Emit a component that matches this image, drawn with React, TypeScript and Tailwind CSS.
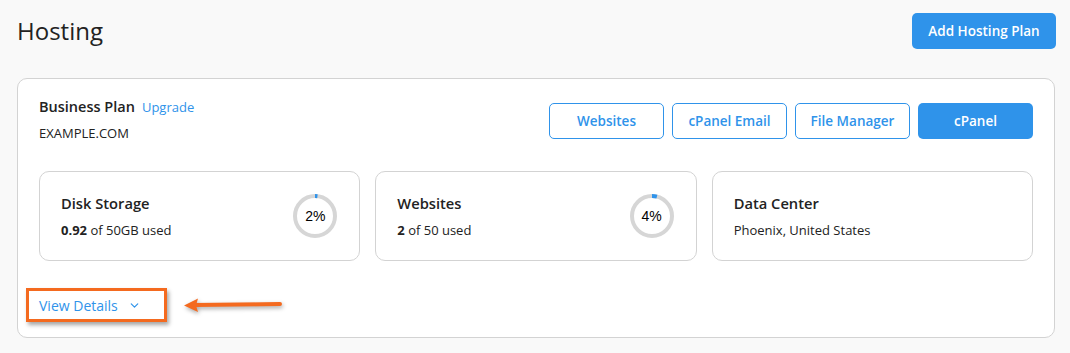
import { ChevronDown } from 'lucide-react'

function Ring({ pct }: { pct: number }) {
  const r = 20
  const c = 2 * Math.PI * r
  return (
    <div className="relative w-[44px] h-[44px] shrink-0">
      <svg width="44" height="44" viewBox="0 0 44 44" className="-rotate-90">
        <circle cx="22" cy="22" r={r} fill="none" stroke="#d6d6d6" strokeWidth="4" />
        <circle cx="22" cy="22" r={r} fill="none" stroke="#2f93ea" strokeWidth="4" strokeDasharray={`${(c * pct) / 100} ${c}`} />
      </svg>
      <span className="absolute inset-0 flex items-center justify-center text-[14px] text-black font-['Liberation_Sans',sans-serif]">{pct}%</span>
    </div>
  )
}

function Stat({ title, children, pct }: { title: string; children: React.ReactNode; pct?: number }) {
  return (
    <div className="flex-1 h-[90px] bg-white border border-[#d3d3d3] rounded-[10px] pl-[21px] pr-[22px] flex items-center justify-between">
      <div className="flex flex-col">
        <div className="text-[14.7px] font-semibold text-[#222] leading-5">{title}</div>
        <div className="text-[13px] text-[#222] mt-[7px] leading-5">{children}</div>
      </div>
      {pct !== undefined && <Ring pct={pct} />}
    </div>
  )
}

export default function App() {
  const btns = ['Websites', 'cPanel Email', 'File Manager']
  return (
    <div className="w-[1070px] h-[353px] bg-[#f9f9f9] font-['Open_Sans',sans-serif] text-[#222] pl-[17px] pr-[15px] pt-[13px] overflow-hidden">
      <div className="flex items-start justify-between">
        <h1 className="text-[24px] leading-[36px] text-[#222]">Hosting</h1>
        <button className="h-[36px] w-[144px] mr-[-1px] rounded-[5px] bg-[#2f93ea] text-white text-[13.5px] font-semibold">Add Hosting Plan</button>
      </div>
      <div className="mt-[29px] h-[260px] bg-white border border-[#d3d3d3] rounded-[10px] px-[21px] pt-[16px]">
        <div className="flex items-start justify-between h-[44px]">
          <div className="pt-[1px]">
            <div className="flex items-baseline gap-[7px]">
              <span className="text-[14.5px] font-semibold text-[#222]">Business Plan</span>
              <span className="text-[13px] text-[#2f93ea]">Upgrade</span>
            </div>
            <div className="text-[13px] text-[#222] mt-[6px]">EXAMPLE.COM</div>
          </div>
          <div className="flex gap-[8px] mt-[8px]">
            {btns.map(b => (
              <button key={b} className="h-[36px] w-[115px] rounded-[5px] border border-[#2f93ea] bg-white text-[#2f93ea] text-[13.5px] font-semibold">{b}</button>
            ))}
            <button className="h-[36px] w-[115px] rounded-[5px] bg-[#2f93ea] text-white text-[13.5px] font-semibold">cPanel</button>
          </div>
        </div>
        <div className="flex gap-[15px] mt-[32px]">
          <Stat title="Disk Storage" pct={2}>
            <b className="font-bold">0.92</b> of 50GB used
          </Stat>
          <Stat title="Websites" pct={4}>
            <b className="font-bold">2</b> of 50 used
          </Stat>
          <Stat title="Data Center">Phoenix, United States</Stat>
        </div>
        <div className="flex items-center mt-[27px] ml-[-13px]">
          <div className="w-[141px] h-[34px] border-[3px] border-[#f46a1f] shadow-[2px_3px_4px_rgba(0,0,0,0.35)] flex items-center pl-[10px] gap-[10px] text-[14px] text-[#2f93ea]">
            View Details
            <ChevronDown size={13} strokeWidth={2.2} />
          </div>
          <svg width="104" height="20" viewBox="0 0 104 20" className="ml-[15px] mt-[2px] drop-shadow-[1px_2px_2px_rgba(0,0,0,0.35)]">
            <line x1="12" y1="9" x2="98" y2="8" stroke="#f46a1f" strokeWidth="4" strokeLinecap="round" />
            <polygon points="2,9.5 16,2.5 14,9.5 16,16" fill="#f46a1f" />
          </svg>
        </div>
      </div>
    </div>
  )
}
